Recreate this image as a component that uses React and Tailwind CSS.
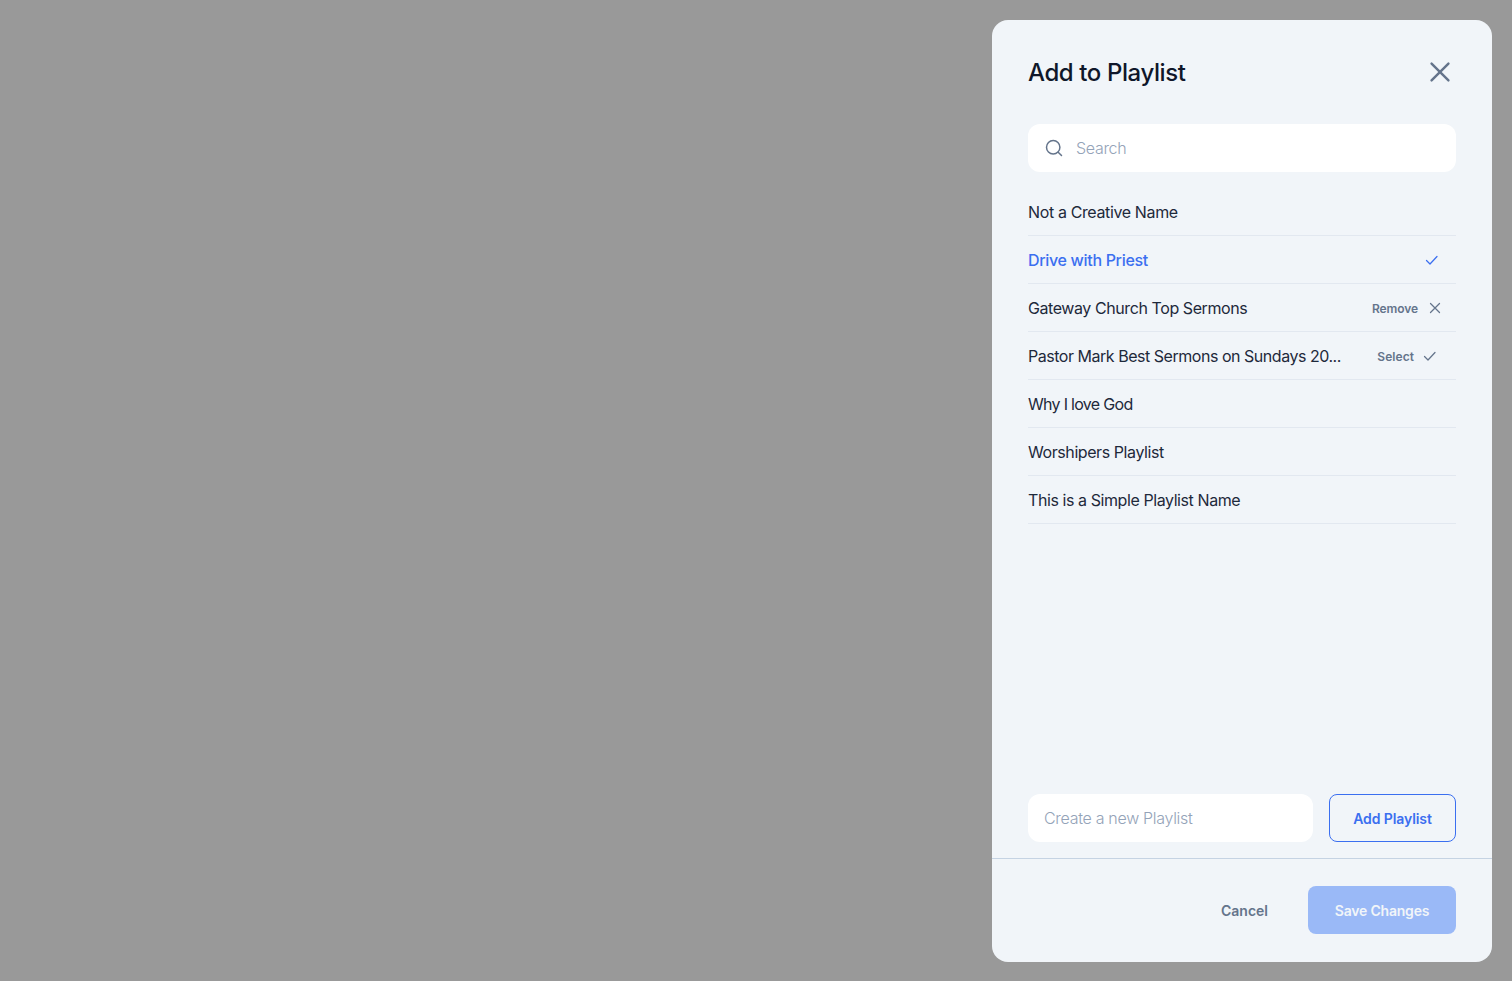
import React from "react";

const F = "font-['Inter',sans-serif]";

function Check({ className }) {
  return (
    <svg className={className} width="16" height="16" viewBox="0 0 16 16" fill="none" stroke="currentColor" strokeWidth="1.25" strokeLinecap="round" strokeLinejoin="round">
      <path d="M2.5 8.5L6 12L13 4.5" />
    </svg>
  );
}

function Cross({ className, size = 16, sw = 1.25 }) {
  return (
    <svg className={className} width={size} height={size} viewBox="0 0 16 16" fill="none" stroke="currentColor" strokeWidth={sw} strokeLinecap="round">
      <path d="M3.5 3.5L12.5 12.5M12.5 3.5L3.5 12.5" />
    </svg>
  );
}

function Row({ children, right, blue, textClass = "tracking-[-0.42px]" }) {
  return (
    <div className={`flex h-12 items-center justify-between border-b border-[#e2e8f0] text-[16px] ${blue ? "text-[#3b6ff0] font-medium" : "text-[#1e293b]"}`}>
      <span className={textClass}>{children}</span>
      {right}
    </div>
  );
}

export default function App() {
  return (
    <div className={`${F} flex h-[981px] w-[1512px] justify-end overflow-hidden bg-[#999999] pt-5 pr-5 pb-[19px]`}>
      <div className="flex w-[500px] flex-col rounded-2xl bg-[#f1f5f9]">
        <div className="flex flex-1 flex-col px-9 pt-9">
          <div className="flex h-8 items-center justify-between">
            <h2 className="pt-0.5 text-[24px] font-medium tracking-[-0.4px] text-[#0f172a]">Add to Playlist</h2>
            <Cross className="mx-px text-[#64748b]" size={30} sw={1.3} />
          </div>

          <div className="mt-9 flex h-12 items-center gap-3 rounded-xl bg-white px-4">
            <svg width="20" height="20" viewBox="0 0 20 20" fill="none" stroke="#64748b" strokeWidth="1.5" strokeLinecap="round">
              <circle cx="9.2" cy="9.2" r="6.7" />
              <path d="M14.2 14.2L17.5 17.5" />
            </svg>
            <span className="text-[16px] font-light tracking-[-0.3px] text-[#94a3b8]">Search</span>
          </div>

          <div className="mt-4 flex flex-col">
            <Row textClass="tracking-[-0.37px]">Not a Creative Name</Row>
            <Row blue textClass="tracking-[-0.32px]" right={<Check className="mr-4 text-[#3b6ff0]" />}>Drive with Priest</Row>
            <Row right={
              <div className="mr-[13px] flex items-center gap-[9px] text-[12px] font-semibold tracking-[-0.1px] text-[#64748b]">
                <span className="pt-0.5">Remove</span>
                <Cross />
              </div>
            }>Gateway Church Top Sermons</Row>
            <Row textClass="tracking-[-0.47px]" right={
              <div className="mr-[18px] flex items-center gap-2 text-[12px] font-semibold tracking-[0.05px] text-[#64748b]">
                <span className="pt-0.5">Select</span>
                <Check />
              </div>
            }>Pastor Mark Best Sermons on Sundays 20...</Row>
            <Row textClass="tracking-[-0.7px]">Why I love God</Row>
            <Row>Worshipers Playlist</Row>
            <Row>This is a Simple Playlist Name</Row>
          </div>

          <div className="mt-auto mb-4 flex gap-4">
            <div className="flex h-12 flex-1 items-center rounded-xl bg-white px-4 text-[16px] font-light tracking-[-0.3px] text-[#94a3b8]">Create a new Playlist</div>
            <button className="h-12 w-[127px] rounded-lg border border-[#3b6ff0] text-[14px] font-semibold tracking-[-0.1px] text-[#3b6ff0]">Add Playlist</button>
          </div>
        </div>

        <div className="flex items-center justify-end gap-10 border-t border-[#c5d3e3] px-9 pt-[27px] pb-7">
          <button className="text-[14px] font-semibold text-[#64748b]">Cancel</button>
          <button className="h-12 w-[148px] rounded-lg bg-[#9ab9f7] text-[14px] font-semibold tracking-[-0.2px] text-[#f1f5f9]">Save Changes</button>
        </div>
      </div>
    </div>
  );
}
